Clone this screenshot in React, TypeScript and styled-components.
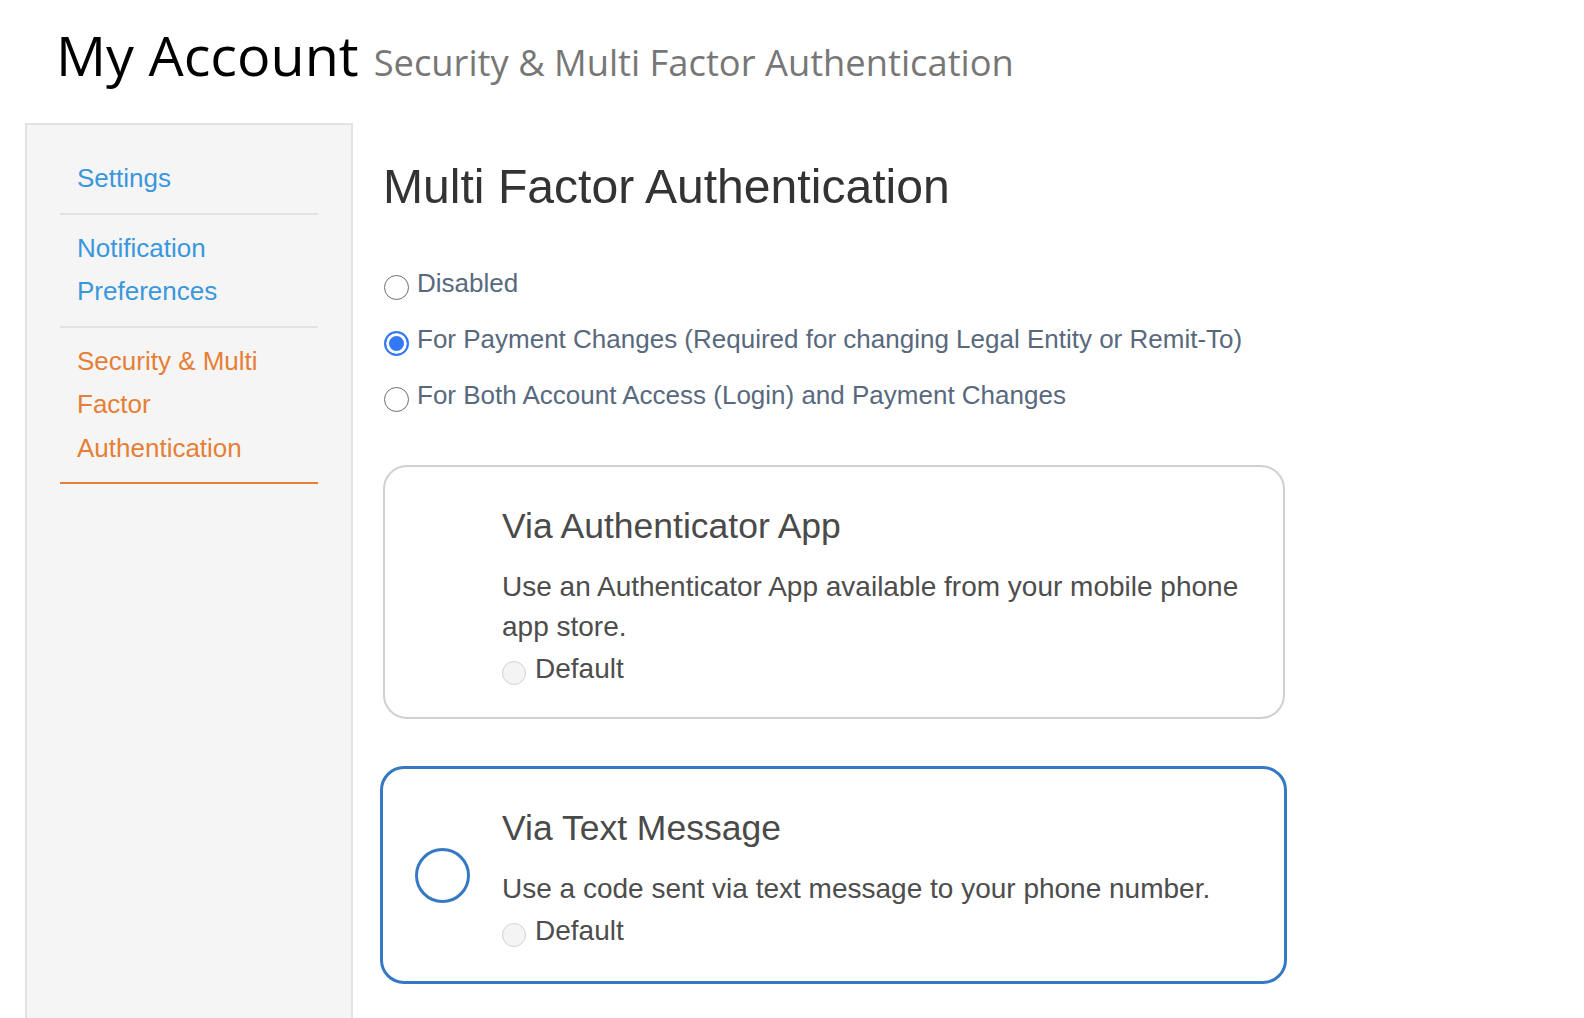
import React, { useState } from 'react';
import styled, { createGlobalStyle } from 'styled-components';

const GlobalStyle = createGlobalStyle`
  html, body {
    margin: 0;
    padding: 0;
    background: #ffffff;
  }
  body {
    font-family: 'Liberation Sans', Arial, Helvetica, sans-serif;
  }
  * {
    box-sizing: border-box;
  }
`;

const Page = styled.div`
  min-height: 100vh;
  display: flex;
  flex-direction: column;
  overflow: hidden;
`;

const Header = styled.header`
  display: flex;
  align-items: baseline;
  gap: 15px;
  padding: 23px 0 0 56px;
  margin-bottom: 36px;
  font-family: 'Open Sans', 'Liberation Sans', sans-serif;
`;

const PageTitle = styled.h1`
  margin: 0;
  font-size: 55.7px;
  line-height: 63px;
  font-weight: 400;
  color: #000000;
`;

const PageSubtitle = styled.span`
  font-size: 36.3px;
  color: #777777;
`;

const Layout = styled.div`
  flex: 1;
  display: flex;
  gap: 30px;
  padding-left: 25px;
`;

const Sidebar = styled.nav`
  width: 328px;
  flex-shrink: 0;
  background: #f5f5f5;
  border: 2px solid #e3e3e3;
  border-bottom: none;
  padding: 20px 33px;
`;

const NavItem = styled.a<{ $active?: boolean }>`
  display: block;
  padding: 12px 0 12px 17px;
  font-size: 26px;
  line-height: 43.5px;
  color: ${(p) => (p.$active ? '#e67f35' : '#3a97dc')};
  text-decoration: none;
  border-bottom: 2px solid ${(p) => (p.$active ? '#e67f35' : '#e2e2e2')};
  cursor: pointer;
`;

const Main = styled.main`
  width: 902px;
  padding-top: 37px;
`;

const Heading = styled.h2`
  margin: 0;
  font-size: 48.1px;
  line-height: 52px;
  font-weight: 400;
  color: #333333;
`;

const OptionList = styled.div`
  margin-top: 43px;
`;

const OptionRow = styled.label`
  display: flex;
  align-items: flex-start;
  gap: 8px;
  font-size: 26px;
  line-height: 56px;
  color: #58697e;
  cursor: pointer;
`;

const Radio = styled.span<{ $checked?: boolean }>`
  width: 25px;
  height: 25px;
  margin: 20px 0 0 1px;
  flex-shrink: 0;
  border-radius: 50%;
  border: ${(p) => (p.$checked ? '2px solid #3478f6' : '1.7px solid #6e6e6e')};
  background: ${(p) => (p.$checked ? '#3478f6' : '#ffffff')};
  box-shadow: ${(p) => (p.$checked ? 'inset 0 0 0 3px #ffffff' : 'none')};
`;

const Card = styled.div<{ $active?: boolean }>`
  display: grid;
  grid-template-columns: ${(p) => (p.$active ? '119px' : '117px')} 1fr;
  border: ${(p) => (p.$active ? '3px solid #3578c3' : '2px solid #d0d0d0')};
  border-radius: 24px;
  margin: ${(p) => (p.$active ? '47px -2px 0 -3px' : '42px 0 0 0')};
  padding-right: 30px;
`;

const CardIcon = styled.span`
  align-self: center;
  justify-self: center;
  width: 55px;
  height: 55px;
  border-radius: 50%;
  border: 3px solid #3578c3;
`;

const CardBody = styled.div<{ $bottom: number }>`
  grid-column: 2;
  padding: 40px 0 ${(p) => p.$bottom}px;
`;

const CardTitle = styled.h3`
  margin: 0;
  font-size: 35.5px;
  line-height: 39px;
  font-weight: 400;
  color: #4a4a4a;
`;

const CardText = styled.p`
  margin: 21px 0 0;
  font-size: 28px;
  line-height: 40px;
  color: #4d4d4d;
`;

const DefaultRow = styled.label`
  display: flex;
  align-items: flex-start;
  gap: 9px;
  margin-top: 2px;
  font-size: 28px;
  line-height: 40px;
  color: #4d4d4d;
`;

const SmallRadio = styled.span`
  width: 24px;
  height: 24px;
  margin-top: 12px;
  flex-shrink: 0;
  border-radius: 50%;
  border: 1.5px solid #d2d2d2;
  background: #f4f4f4;
`;

const navItems = [
  { label: 'Settings' },
  { label: 'Notification Preferences' },
  { label: 'Security & Multi Factor Authentication', active: true },
];

const mfaOptions = [
  'Disabled',
  'For Payment Changes (Required for changing Legal Entity or Remit-To)',
  'For Both Account Access (Login) and Payment Changes',
];

const App: React.FC = () => {
  const [selected, setSelected] = useState<number>(1);

  return (
    <>
      <GlobalStyle />
      <Page>
        <Header>
          <PageTitle>My Account</PageTitle>
          <PageSubtitle>Security &amp; Multi Factor Authentication</PageSubtitle>
        </Header>
        <Layout>
          <Sidebar>
            {navItems.map((item) => (
              <NavItem key={item.label} $active={item.active}>
                {item.label}
              </NavItem>
            ))}
          </Sidebar>
          <Main>
            <Heading>Multi Factor Authentication</Heading>
            <OptionList>
              {mfaOptions.map((label, i) => (
                <OptionRow key={label} onClick={() => setSelected(i)}>
                  <Radio $checked={selected === i} />
                  {label}
                </OptionRow>
              ))}
            </OptionList>

            <Card>
              <CardBody $bottom={28}>
                <CardTitle>Via Authenticator App</CardTitle>
                <CardText>
                  Use an Authenticator App available from your mobile phone app store.
                </CardText>
                <DefaultRow>
                  <SmallRadio />
                  Default
                </DefaultRow>
              </CardBody>
            </Card>

            <Card $active>
              <CardIcon />
              <CardBody $bottom={30}>
                <CardTitle>Via Text Message</CardTitle>
                <CardText>Use a code sent via text message to your phone number.</CardText>
                <DefaultRow>
                  <SmallRadio />
                  Default
                </DefaultRow>
              </CardBody>
            </Card>
          </Main>
        </Layout>
      </Page>
    </>
  );
};

export default App;
